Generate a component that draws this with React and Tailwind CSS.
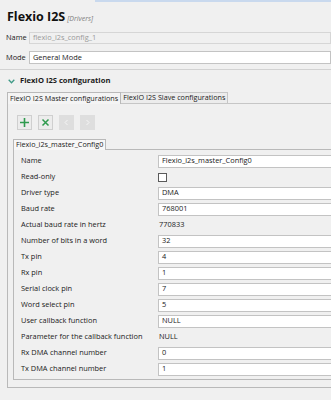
import React from 'react';

const font = { fontFamily: '"Open Sans", "Noto Sans", sans-serif' };

const rows = [
    { label: 'Name', value: 'Flexio_i2s_master_Config0', kind: 'input' },
    { label: 'Read-only', kind: 'check' },
    { label: 'Driver type', value: 'DMA', kind: 'input' },
    { label: 'Baud rate', value: '768001', kind: 'input' },
    { label: 'Actual baud rate in hertz', value: '770833', kind: 'text' },
    { label: 'Number of bits in a word', value: '32', kind: 'input' },
    { label: 'Tx pin', value: '4', kind: 'input' },
    { label: 'Rx pin', value: '1', kind: 'input' },
    { label: 'Serial clock pin', value: '7', kind: 'input' },
    { label: 'Word select pin', value: '5', kind: 'input' },
    { label: 'User callback function', value: 'NULL', kind: 'input' },
    { label: 'Parameter for the callback function', value: 'NULL', kind: 'text' },
    { label: 'Rx DMA channel number', value: '0', kind: 'input' },
    { label: 'Tx DMA channel number', value: '1', kind: 'input' },
];

function ToolButton({ children, disabled }) {
    return (
        <div
            className={
                'w-[15px] h-[15px] flex items-center justify-center border ' +
                (disabled ? 'bg-[#dedede] border-[#dedede]' : 'bg-[#ececec] border-[#cfcfcf]')
            }
        >
            {children}
        </div>
    );
}

function PropRow({ row }) {
    return (
        <div className="h-[16px] flex items-center">
            <div className="w-[144px] pl-[7px] text-[7.4px] text-[#1a1a1a] leading-none">{row.label}</div>
            {row.kind === 'input' && (
                <div className="flex-1 h-[13px] bg-white border border-[#c3c3c3] flex items-center pl-[3px] text-[7.4px] text-[#1a1a1a] leading-none">
                    {row.value}
                </div>
            )}
            {row.kind === 'text' && (
                <div className="flex-1 pl-[1px] text-[7.4px] text-[#1a1a1a] leading-none">{row.value}</div>
            )}
            {row.kind === 'check' && (
                <div className="w-[9px] h-[9px] bg-white border border-[#5a5a5a]"></div>
            )}
        </div>
    );
}

export default function App() {
    return (
        <div className="w-[331px] h-[400px] bg-[#f0f0f0] overflow-hidden" style={font}>
            {/* top accent line */}
            <div className="ml-[95px] h-[2px] bg-[#c9d9ee]"></div>

            <div className="pl-[7px] pt-[9px] h-[27px] flex items-baseline gap-[2px]">
                <span className="text-[12.5px] font-bold text-[#111] leading-none">Flexio I2S</span>
                <span className="text-[7px] italic text-[#808080] leading-none">[Drivers]</span>
            </div>

            <div className="flex items-center h-[12px] mt-[3px]">
                <span className="w-[29px] pl-[6px] text-[7.4px] text-[#1a1a1a] leading-none">Name</span>
                <div className="flex-1 h-[12px] border border-[#d6d6d6] bg-[#f0f0f0] flex items-center pl-[3px] text-[7.4px] text-[#9a9a9a] leading-none">
                    flexio_i2s_config_1
                </div>
            </div>

            <div className="flex items-center h-[13px] mt-[7px]">
                <span className="w-[29px] pl-[6px] text-[7.4px] text-[#1a1a1a] leading-none">Mode</span>
                <div className="flex-1 h-[13px] border border-[#c3c3c3] bg-white flex items-center pl-[3px] text-[7.4px] text-[#1a1a1a] leading-none">
                    General Mode
                </div>
            </div>

            <div className="mt-[5px] h-[1px] bg-[#d2d2d2]"></div>

            <div className="flex items-center h-[16px] mt-[3px] pl-[8px] gap-[5px]">
                <svg width="7" height="5" viewBox="0 0 7 5">
                    <path d="M0.7 0.8 L3.5 3.8 L6.3 0.8" fill="none" stroke="#3f9a87" strokeWidth="1.3" />
                </svg>
                <span className="text-[7.6px] font-bold text-[#1a1a1a] leading-none">FlexIO I2S configuration</span>
            </div>

            {/* outer tabs */}
            <div className="mt-[3px] pl-[7px] w-[360px]">
                <div className="flex h-[12px]">
                    <div className="h-[12px] px-[2px] border border-b-0 border-[#b9b9b9] bg-[#f4f4f4] flex items-center text-[7.2px] text-[#1a1a1a] leading-none">
                        FlexIO I2S Master configurations
                    </div>
                    <div className="h-[12px] px-[2px] border border-l-0 border-[#c6c6c6] bg-[#ececec] flex items-center text-[7.2px] text-[#1a1a1a] leading-none">
                        FlexIO I2S Slave configurations
                    </div>
                    <div className="flex-1 border-b border-[#c6c6c6]"></div>
                </div>

                <div className="border border-t-0 border-[#b9b9b9] pt-[11px] pb-[7px] pl-[5px]">
                    <div className="flex gap-[6px] pl-[4px]">
                        <ToolButton>
                            <svg width="11" height="11" viewBox="0 0 11 11">
                                <path d="M5.5 1 V10 M1 5.5 H10" stroke="#2f9a4e" strokeWidth="1.6" />
                            </svg>
                        </ToolButton>
                        <ToolButton>
                            <svg width="9" height="9" viewBox="0 0 9 9">
                                <path d="M1.5 1.5 L7.5 7.5 M7.5 1.5 L1.5 7.5" stroke="#2f9a4e" strokeWidth="1.5" />
                            </svg>
                        </ToolButton>
                        <ToolButton disabled>
                            <svg width="7" height="7" viewBox="0 0 7 7">
                                <path d="M4.5 1 L2 3.5 L4.5 6" fill="none" stroke="#f6f6f6" strokeWidth="1" />
                            </svg>
                        </ToolButton>
                        <ToolButton disabled>
                            <svg width="7" height="7" viewBox="0 0 7 7">
                                <path d="M2.5 1 L5 3.5 L2.5 6" fill="none" stroke="#f6f6f6" strokeWidth="1" />
                            </svg>
                        </ToolButton>
                    </div>

                    {/* inner tab */}
                    <div className="mt-[9px] flex h-[11px]">
                        <div className="h-[11px] px-[2px] border border-b-0 border-[#b9b9b9] bg-[#f7f7f7] flex items-center text-[7.2px] text-[#1a1a1a] leading-none">
                            Flexio_i2s_master_Config0
                        </div>
                        <div className="flex-1 border-b border-[#b9b9b9]"></div>
                    </div>
                    <div className="border border-t-0 border-[#b9b9b9] pt-[3px] pb-[2px]">
                        {rows.map((row) => (
                            <PropRow key={row.label} row={row} />
                        ))}
                    </div>
                </div>
            </div>
        </div>
    );
}
